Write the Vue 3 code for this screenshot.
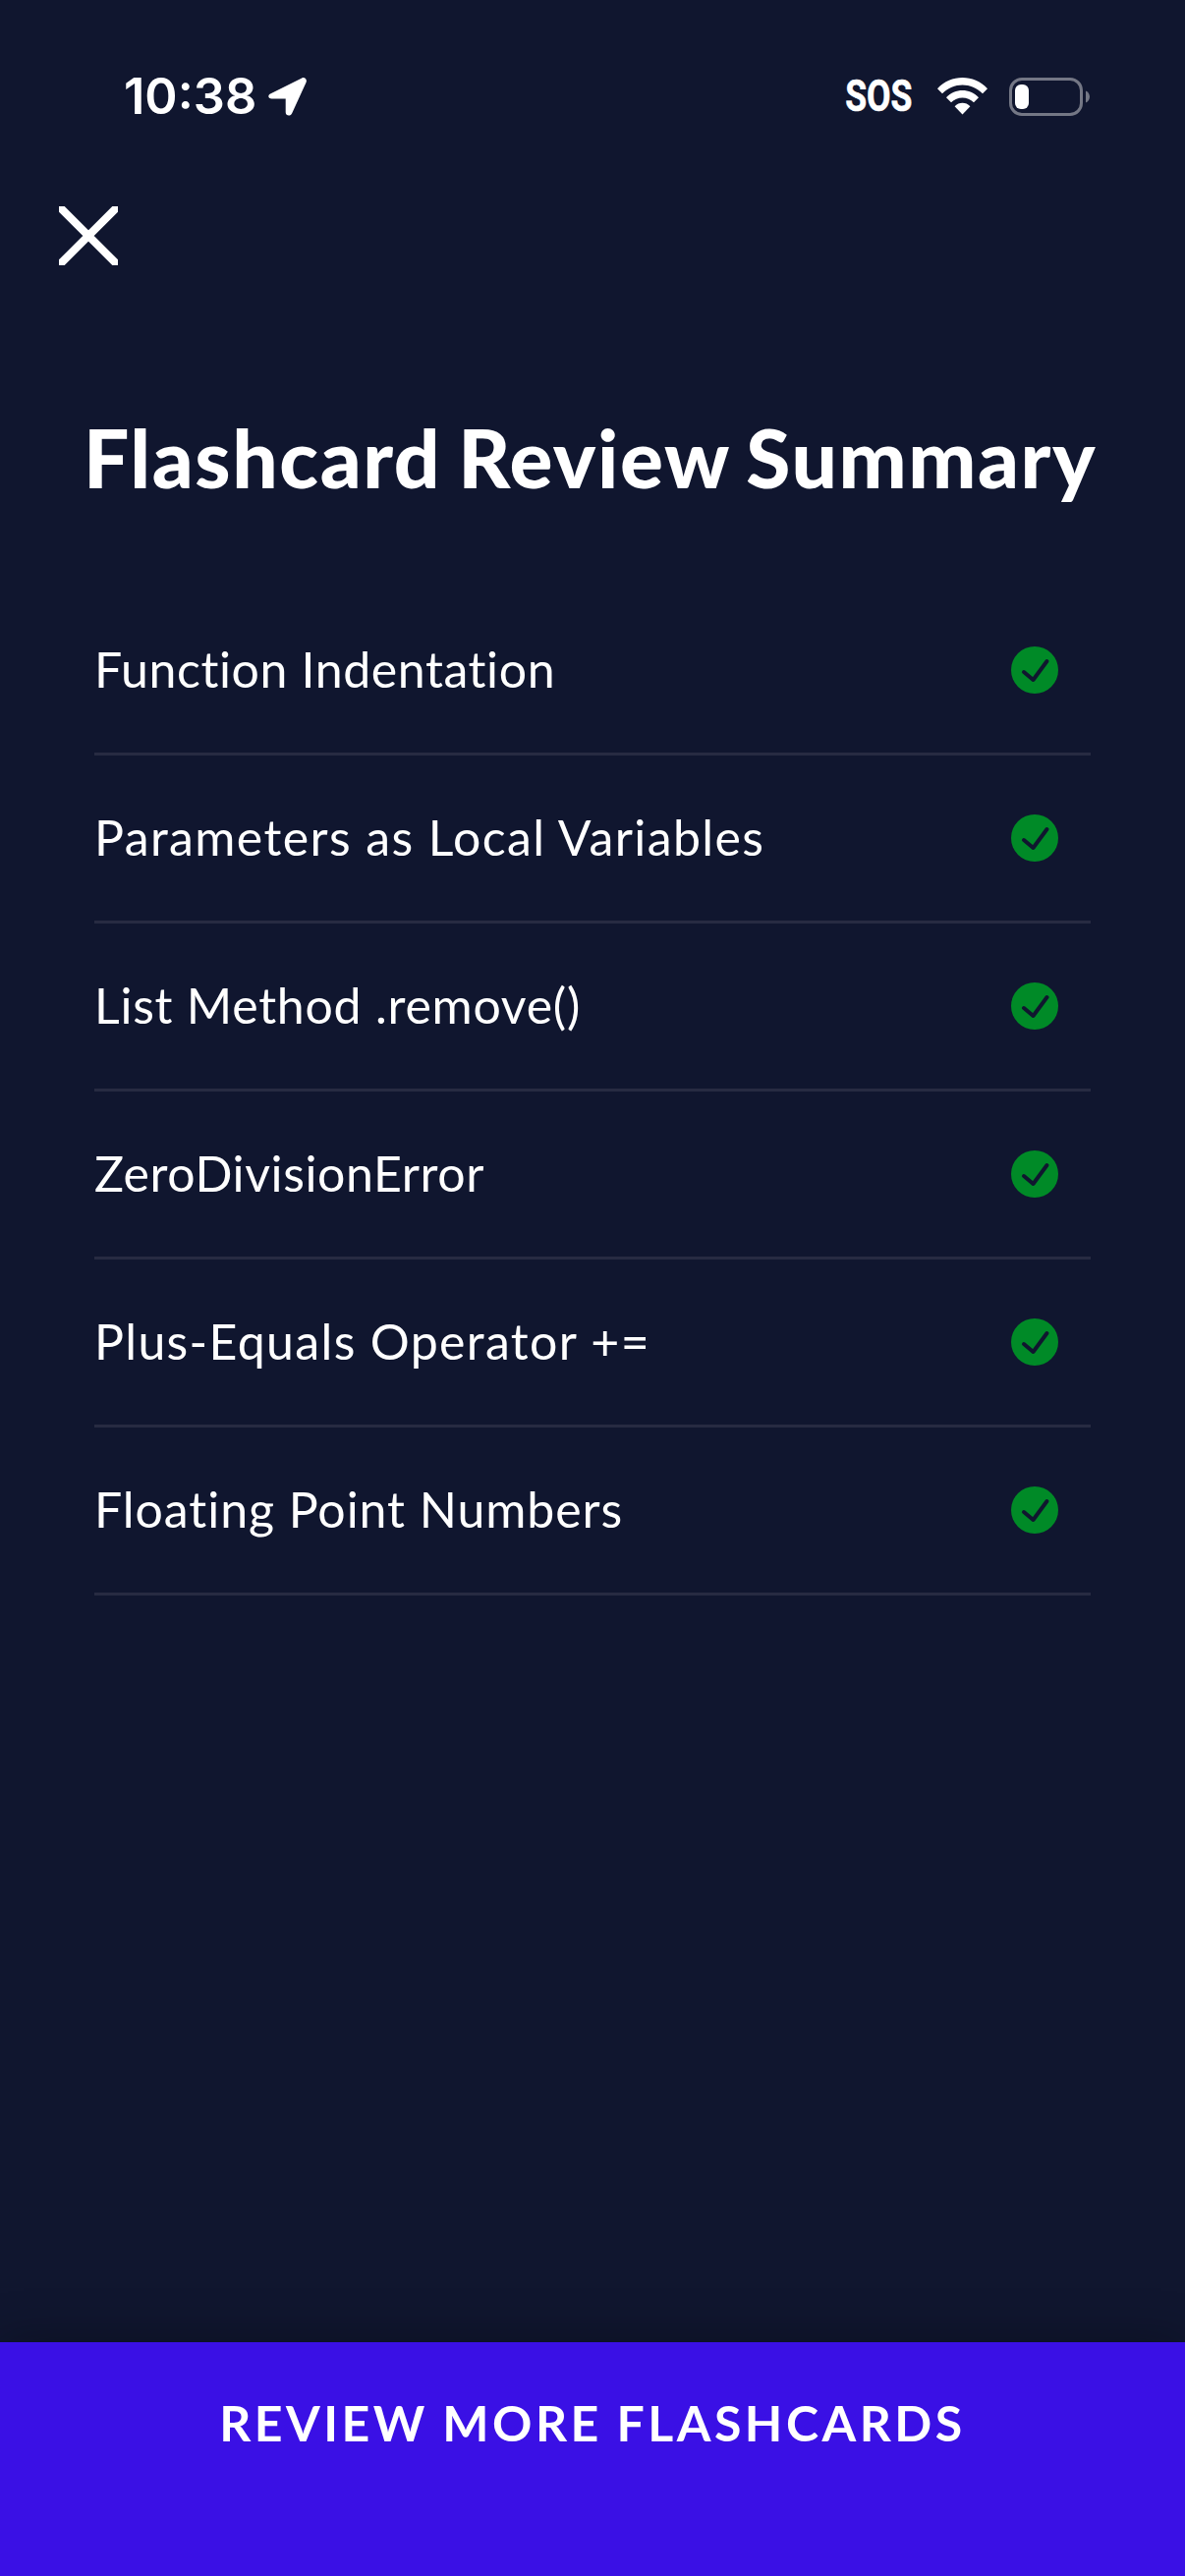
<template>
  <div class="screen">
    <header class="status-bar">
      <div class="status-left">
        <span class="clock">10:38</span>
        <svg class="location" viewBox="0 0 39 39">
          <path
            d="M2.6 16.2 34.2.4C37-.9 39.8 1.8 38.6 4.7L24.2 36.2C22.7 39.8 17.7 39 17.7 35.2V21.5H3.6C-.3 21.5-.9 17.8 2.6 16.2Z"
          />
        </svg>
      </div>
      <div class="status-right">
        <span class="sos">SOS</span>
        <svg class="wifi" viewBox="0 0 51 38">
          <path d="M0 11.2C14-3.7 37-3.7 51 11.2L46 16.3C34.7 4.7 16.3 4.7 5 16.3Z" />
          <path d="M9 20.2C18.3 10.6 32.7 10.6 42 20.2L37 25.3C30.6 18.8 20.4 18.8 14 25.3Z" />
          <path d="M17.6 29.3C22 24.7 29 24.7 33.4 29.3L25.5 37.4Z" />
        </svg>
        <svg class="battery" viewBox="0 0 82 39">
          <rect class="battery-shell" x="1.5" y="1.5" width="72" height="36" rx="11.5" />
          <rect x="6" y="7" width="14" height="25" rx="6" />
          <path class="battery-cap" d="M78 13.5C83.3 15.6 83.3 23.4 78 25.5Z" />
        </svg>
      </div>
    </header>

    <nav class="toolbar">
      <button class="close" aria-label="Close">
        <svg viewBox="0 0 60 60">
          <path d="M0 0 60 60M60 0 0 60" />
        </svg>
      </button>
    </nav>

    <main class="content">
      <h1 class="title">Flashcard Review Summary</h1>
      <ul class="cards">
        <li v-for="card in cards" :key="card.name" class="card">
          <span class="card-name" :style="{ letterSpacing: card.tracking + 'px' }">{{ card.name }}</span>
          <svg class="check" viewBox="0 0 48 48">
            <circle cx="24" cy="24" r="24" />
            <path d="M13 26 22.5 34 36.5 15" />
          </svg>
        </li>
      </ul>
    </main>

    <button class="review-more">REVIEW MORE FLASHCARDS</button>
  </div>
</template>

<script setup>
const cards = [
  { name: 'Function Indentation', tracking: 0.6 },
  { name: 'Parameters as Local Variables', tracking: 1.4 },
  { name: 'List Method .remove()', tracking: 0.75 },
  { name: 'ZeroDivisionError', tracking: 0.6 },
  { name: 'Plus-Equals Operator +=', tracking: 1.35 },
  { name: 'Floating Point Numbers', tracking: 0.95 }
]
</script>

<style>
body {
  margin: 0;
  background: #10162f;
}
</style>

<style scoped>
.screen {
  display: flex;
  flex-direction: column;
  width: 1206px;
  height: 2622px;
  overflow: hidden;
  background: #10162f;
  color: #fff;
  font-family: Lato, 'Noto Sans', sans-serif;
}

button {
  border: 0;
  padding: 0;
  background: none;
  color: inherit;
  font-family: inherit;
}

svg {
  display: block;
  fill: #fff;
}

.status-bar {
  display: flex;
  justify-content: space-between;
  align-items: center;
  box-sizing: border-box;
  height: 196px;
  padding: 0 97px 0 126px;
}

.status-left,
.status-right {
  display: flex;
  align-items: center;
}

.clock {
  width: 147px;
  font-family: Inter, sans-serif;
  font-size: 50.5px;
  font-weight: 600;
  line-height: 60px;
}

.location {
  width: 39px;
  height: 39px;
}

/* condensed lettering, squeezed towards its right edge */
.sos {
  margin-right: 26px;
  font-family: Roboto, sans-serif;
  font-size: 45px;
  font-weight: 700;
  line-height: 60px;
  transform: scaleX(0.79);
  transform-origin: right center;
  -webkit-text-stroke: 0.6px #fff;
}

.wifi {
  width: 51px;
  height: 38px;
  margin-right: 22px;
}

.battery {
  width: 82px;
  height: 39px;
}

.battery-shell {
  fill: none;
  stroke: #747785;
  stroke-width: 3;
}

.battery-cap {
  fill: #747785;
}

.toolbar {
  height: 88px;
  padding: 14px 60px 0;
}

.close svg {
  width: 60px;
  height: 60px;
}

.close path {
  fill: none;
  stroke: #fff;
  stroke-width: 8;
}

.content {
  flex: 1;
}

.title {
  margin: 117px 0 83px;
  padding-left: 85px;
  font-size: 82px;
  font-weight: 900;
  line-height: 100px;
  letter-spacing: 1.6px;
  word-spacing: -4px;
  white-space: nowrap;
}

.cards {
  margin: 0 96px;
  padding: 0;
  list-style: none;
}

.card {
  display: flex;
  justify-content: space-between;
  align-items: center;
  box-sizing: border-box;
  height: 171px;
  padding-right: 33px;
  border-bottom: 3px solid #272b42;
}

.card-name {
  padding-bottom: 3px;
  font-size: 50px;
  line-height: 60px;
  font-variant-ligatures: none;
  white-space: nowrap;
}

.check {
  width: 48px;
  height: 48px;
}

.check circle {
  fill: #008a27;
}

.check path {
  fill: none;
  stroke: #10162f;
  stroke-width: 4;
  stroke-linecap: round;
  stroke-linejoin: round;
}

.review-more {
  height: 238px;
  padding-bottom: 74px;
  background: #3a10e5;
  box-shadow: 0 0 48px rgba(0, 0, 0, 0.3);
  font-size: 50px;
  font-weight: 700;
  letter-spacing: 3.5px;
  word-spacing: -1px;
}
</style>
